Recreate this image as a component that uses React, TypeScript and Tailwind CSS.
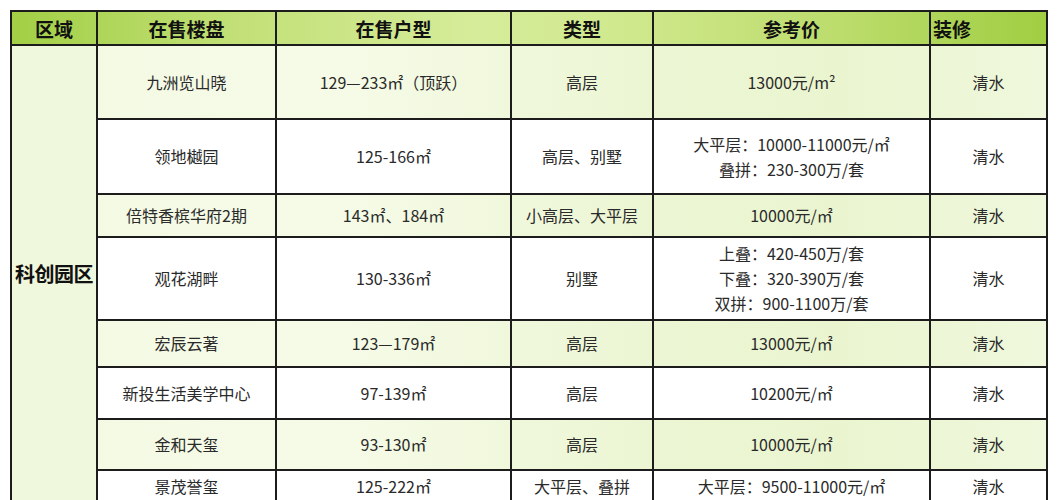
import React from "react";

type Row = {
  name: string;
  size: string;
  kind: string;
  price: string[];
  deco: string;
  h: string;
  tint: boolean;
};

const rows: Row[] = [
  { name: "九洲览山晓", size: "129—233㎡（顶跃）", kind: "高层", price: ["13000元/m²"], deco: "清水", h: "h-[74px]", tint: true },
  { name: "领地樾园", size: "125-166㎡", kind: "高层、别墅", price: ["大平层：10000-11000元/㎡", "叠拼：230-300万/套"], deco: "清水", h: "h-[75px]", tint: false },
  { name: "倍特香槟华府2期", size: "143㎡、184㎡", kind: "小高层、大平层", price: ["10000元/㎡"], deco: "清水", h: "h-[43px]", tint: true },
  { name: "观花湖畔", size: "130-336㎡", kind: "别墅", price: ["上叠：420-450万/套", "下叠：320-390万/套", "双拼：900-1100万/套"], deco: "清水", h: "h-[83px]", tint: false },
  { name: "宏辰云著", size: "123—179㎡", kind: "高层", price: ["13000元/㎡"], deco: "清水", h: "h-[47px]", tint: true },
  { name: "新投生活美学中心", size: "97-139㎡", kind: "高层", price: ["10200元/㎡"], deco: "清水", h: "h-[52px]", tint: false },
  { name: "金和天玺", size: "93-130㎡", kind: "高层", price: ["10000元/㎡"], deco: "清水", h: "h-[51px]", tint: true },
  { name: "景茂誉玺", size: "125-222㎡", kind: "大平层、叠拼", price: ["大平层：9500-11000元/㎡"], deco: "清水", h: "h-[32px]", tint: false },
];

const line = "border-2 border-[#1c1c1c] align-middle";
const cell = `${line} text-center px-1`;

export default function App() {
  return (
    <div className="w-[1057px] h-[500px] overflow-hidden bg-white pt-[10px] pl-[10px] font-['Noto_Sans_CJK_SC','Noto_Sans',sans-serif]">
      <table className="w-[1036px] table-fixed border-collapse border-2 border-[#1c1c1c]">
        <colgroup>
          <col className="w-[86px]" />
          <col className="w-[179px]" />
          <col className="w-[235px]" />
          <col className="w-[142px]" />
          <col className="w-[277px]" />
          <col className="w-[117px]" />
        </colgroup>
        <thead>
          <tr className="h-[34px] bg-[linear-gradient(90deg,#a2cf45_0%,#c2e077_22%,#d6ec9a_45%,#cfe88c_60%,#bcdc6c_80%,#a0ce42_100%)] text-[19px] font-bold text-[#111] leading-none">
            <th className={cell}>区域</th>
            <th className={cell}>在售楼盘</th>
            <th className={cell}>在售户型</th>
            <th className={cell}>类型</th>
            <th className={cell}>参考价</th>
            <th className={`${line} text-left px-[2px]`}>装修</th>
          </tr>
        </thead>
        <tbody className="text-[16px] text-[#2a2a2a] leading-[25px]">
          {rows.map((r, i) => (
            <tr
              key={r.name}
              className={`${r.h} ${
                r.tint
                  ? "bg-[linear-gradient(90deg,#f3f9e2_0%,#f6fbe8_30%,#ecf6d4_60%,#eaf5d0_80%,#eff8dc_100%)]"
                  : "bg-white"
              }`}
            >
              {i === 0 && (
                <td
                  rowSpan={rows.length}
                  className={`${line} bg-[#eff7dc] text-center whitespace-nowrap text-[20px] font-bold text-[#111] tracking-[-0.5px]`}
                >
                  科创园区
                </td>
              )}
              <td className={cell}>{r.name}</td>
              <td className={cell}>{r.size}</td>
              <td className={cell}>{r.kind}</td>
              <td className={cell}>
                {r.price.map((p) => (
                  <div key={p}>{p}</div>
                ))}
              </td>
              <td className={cell}>{r.deco}</td>
            </tr>
          ))}
        </tbody>
      </table>
    </div>
  );
}
